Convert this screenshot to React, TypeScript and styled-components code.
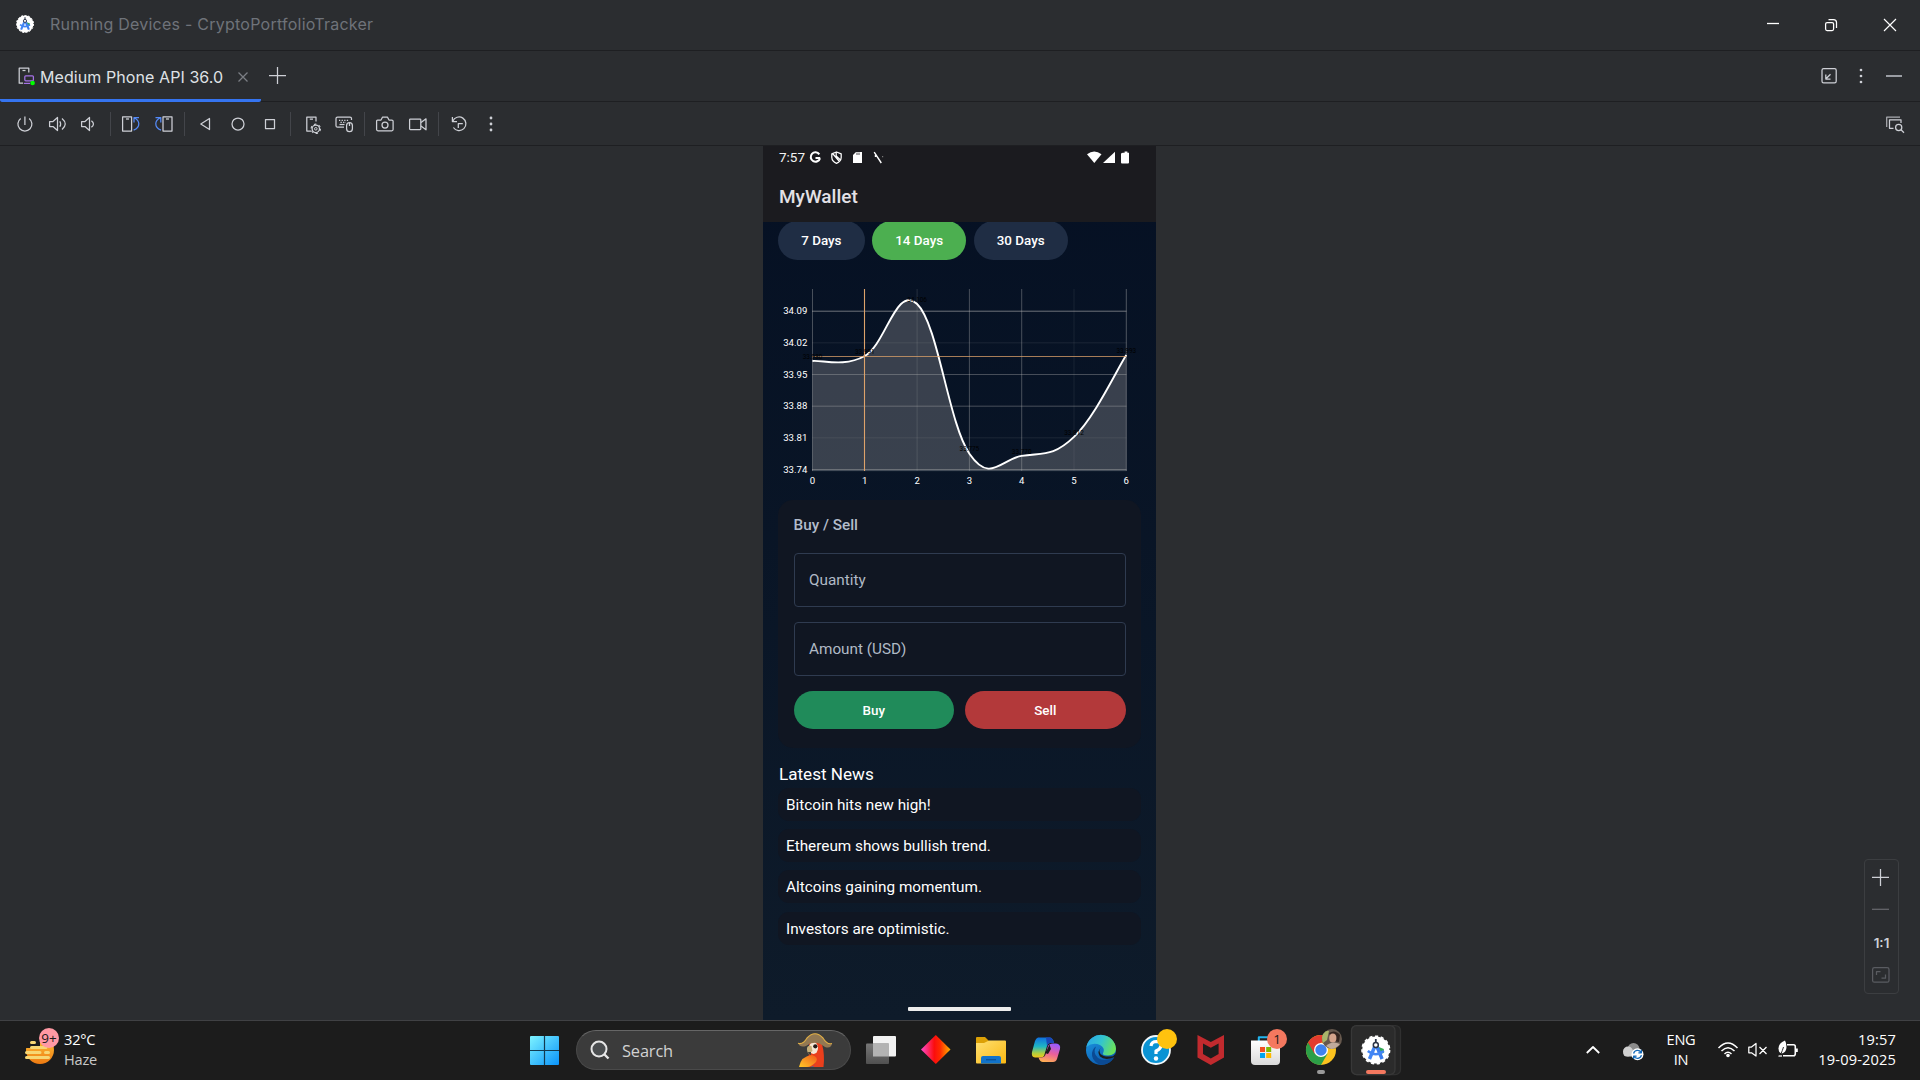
import React from 'react';
import styled, { createGlobalStyle } from 'styled-components';

const Global = createGlobalStyle`
  * { box-sizing: border-box; }
  html, body { margin: 0; padding: 0; background: #2b2d30; overflow: hidden; }
  body { font-family: Inter, "Liberation Sans", sans-serif; color: #dfe1e5; }
  svg { display: block; flex: none; }
`;

const Desktop = styled.div`
  width: 1920px;
  height: 1080px;
  display: flex;
  flex-direction: column;
  background: #2b2d30;
`;

/* ---------- IDE window ---------- */

const TitleBar = styled.header`
  height: 51px;
  display: flex;
  align-items: center;
  border-bottom: 1px solid #1e1f22;
  padding: 0 0 2px 16px;
`;

const TitleText = styled.div`
  margin-left: 16px;
  font-size: 16px;
  letter-spacing: 0.24px;
  color: #6f737a;
  white-space: nowrap;
`;

const Push = styled.div`
  margin-left: auto;
  display: flex;
  align-items: center;
`;

const TabBar = styled.div`
  height: 51px;
  display: flex;
  border-bottom: 1px solid #1e1f22;
`;

const Tab = styled.div`
  width: 261px;
  height: 51px;
  display: flex;
  align-items: center;
  padding: 4px 0 0 16px;
  border-bottom: 3px solid #3574f0;
  border-radius: 0 0 2px 2px;
`;

const TabText = styled.span`
  width: 194px;
  margin-left: 4px;
  font-size: 16px;
  letter-spacing: 0.08px;
  color: #dfe1e5;
  white-space: nowrap;
`;

const ToolBar = styled.div`
  height: 44px;
  display: flex;
  align-items: center;
  padding-left: 10px;
  border-bottom: 1px solid #1e1f22;
`;

const Separator = styled.div`
  width: 1px;
  height: 24px;
  margin: 0 5px 0 4px;
  background: #43454a;
`;

const Stage = styled.main`
  height: 874px;
  display: flex;
  justify-content: space-between;
  align-items: flex-end;
`;

const Side = styled.div<{ $w: number }>`
  width: ${(p) => p.$w}px;
  display: flex;
  justify-content: flex-end;
`;

const ZoomPanel = styled.div`
  width: 35px;
  height: 135px;
  margin: 0 21px 26px 0;
  border: 1px solid #3c3e41;
  border-radius: 4px;
  display: flex;
  flex-direction: column;
  align-items: center;
`;

const Ratio = styled.div`
  height: 32px;
  font: 600 13.5px/26px Inter, sans-serif;
  color: #ced0d6;
`;

/* ---------- Phone ---------- */

const Phone = styled.section`
  width: 393px;
  height: 874px;
  display: flex;
  flex-direction: column;
  font-family: Roboto, sans-serif;
  color: #fff;
  background: linear-gradient(#051023, #0e1b2a);
`;

const PhoneHeader = styled.div`
  height: 76px;
  background: #1b1b1f;
  padding: 0 16px;
`;

const StatusBar = styled.div`
  height: 23px;
  display: flex;
  align-items: center;
  font-size: 13.5px;
  color: #f2f2f2;
`;

const StatusTime = styled.span`
  width: 28px;
  padding-bottom: 1px;
`;

const AppTitle = styled.h1`
  margin: 16px 0 0;
  font-size: 19px;
  line-height: 24px;
  font-weight: 500;
  color: #e3e1e6;
`;

const Scroll = styled.div`
  height: 798px;
  overflow: hidden;
  padding: 0 15px;
  display: flex;
  flex-direction: column;
`;

const RangeRow = styled.div`
  display: flex;
  gap: 7.5px;
  margin-top: -1px;
`;

const RangeChip = styled.button<{ $active?: boolean; $w: number }>`
  width: ${(p) => p.$w}px;
  height: 38.5px;
  border: 0;
  padding: 0;
  border-radius: 20px;
  background: ${(p) => (p.$active ? '#4caf50' : '#1f2d44')};
  color: #fff;
  font: 500 13.4px Roboto, sans-serif;
`;

const ChartBox = styled.div`
  height: 228px;
  margin: 12.5px 0 0 -15px;
`;

const Card = styled.div`
  height: 248px;
  padding: 16px 15.5px 0;
  border-radius: 15px;
  background: #101622;
`;

const CardTitle = styled.h2`
  margin: 0 0 18px;
  font-size: 15.3px;
  line-height: 19px;
  font-weight: 500;
  color: #b3bccb;
`;

const Field = styled.div`
  height: 54px;
  margin-bottom: 15px;
  padding-left: 14.5px;
  border: 1px solid #2f3b50;
  border-radius: 4px;
  font-size: 15.3px;
  line-height: 52px;
  color: #b0bac6;
`;

const Actions = styled.div`
  display: flex;
  gap: 11px;
`;

const Action = styled.button<{ $bg: string }>`
  flex: 1;
  height: 38px;
  border: 0;
  border-radius: 20px;
  background: ${(p) => p.$bg};
  color: #fff;
  font: 500 13.4px Roboto, sans-serif;
`;

const NewsTitle = styled.h2`
  margin: 15px 0 3px 1px;
  font-size: 17.1px;
  line-height: 22px;
  font-weight: 400;
`;

const NewsItem = styled.div`
  height: 33px;
  margin-bottom: 8.2px;
  padding-left: 8px;
  border-radius: 11px;
  background: #101622;
  font-size: 15.3px;
  line-height: 34.6px;
  flex: none;
`;

const HomePill = styled.div`
  width: 103px;
  height: 4px;
  margin: auto auto 9px;
  border-radius: 1px;
  background: #ededed;
`;

/* ---------- Taskbar ---------- */

const Taskbar = styled.footer`
  height: 60px;
  display: flex;
  align-items: center;
  background: #1c1c1c;
  border-top: 1px solid #404144;
  font-family: "Open Sans", "Noto Sans", sans-serif;
`;

const Weather = styled.div`
  width: 517px;
  display: flex;
  align-items: center;
  padding: 0 0 1px 22px;
`;

const TwoLines = styled.div<{ $align?: string; $w?: number; $track?: number }>`
  width: ${(p) => (p.$w ? `${p.$w}px` : 'auto')};
  padding-bottom: 3px;
  text-align: ${(p) => p.$align || 'left'};
  font-size: 14.6px;
  line-height: 20px;
  letter-spacing: ${(p) => p.$track ?? -0.3}px;
  color: #fff;
  white-space: nowrap;
`;

const Muted = styled.div`
  color: #c8c8c8;
`;

const Search = styled.div`
  width: 275px;
  height: 40px;
  margin: 0 3px 1px 4px;
  padding: 0 17px 0 13px;
  display: flex;
  align-items: center;
  border-radius: 20px;
  border: 1px solid #4a4a4a;
  border-top-color: #666;
  background: #3b3b3b;
`;

const SearchText = styled.span`
  flex: 1;
  margin-left: 12px;
  padding-top: 1px;
  font-size: 16.4px;
  letter-spacing: -0.15px;
  color: #d2d2d2;
`;

const Tray = styled.div`
  margin-left: auto;
  display: flex;
  align-items: center;
  padding-right: 24px;
`;

/* Each glyph is authored on the window's own pixel grid and cropped by its viewBox. */
type GlyphProps = { x: number; y: number; w: number; h: number; children: React.ReactNode; c?: string };
const Glyph = ({ x, y, w, h, c = '#ced0d6', children }: GlyphProps) => (
  <svg
    width={w}
    height={h}
    viewBox={`${x} ${y} ${w} ${h}`}
    fill="none"
    stroke={c}
    strokeWidth="1.25"
    strokeLinejoin="round"
  >
    {children}
  </svg>
);

const Tool = ({ x, children }: { x: number; children: React.ReactNode }) => (
  <Glyph x={x} y={102} w={32} h={43}>{children}</Glyph>
);

const App1 = ({ i, children }: { i: number; children: React.ReactNode }) => (
  <Glyph x={854 + i * 55} y={1021} w={55} h={59} c="none">{children}</Glyph>
);

const Compass = ({ cx, cy, s }: { cx: number; cy: number; s: number }) => (
  <g transform={`translate(${cx} ${cy}) scale(${s})`} stroke="none">
    <circle r="13.6" fill="#fff" />
    <circle r="13.8" fill="none" stroke="#fff" strokeWidth="1.6" strokeDasharray="3.2 2.6" />
    <path d="M3 -3 L8 -1 L8 3 L4 4Z" fill="#34a853" />
    <path d="M0 -6 L-6.3 9" stroke="#4285f4" strokeWidth="3.4" fill="none" />
    <path d="M0 -6 L6.3 9" stroke="#3b7ded" strokeWidth="3.4" fill="none" />
    <path d="M-8 1 Q0 7.5 8 1" stroke="#4285f4" strokeWidth="2.6" fill="none" />
    <circle cy="-5" r="2.5" fill="#fff" stroke="#2a3345" strokeWidth="1.5" />
    <path d="M0 -11V-8" stroke="#2a3345" strokeWidth="1.8" />
  </g>
);

/* ---------- Price chart ---------- */

const values = [33.98, 33.991, 34.106, 33.775, 33.77, 33.812, 33.993];
const px = (i: number) => 812.5 + i * 52.3;
const py = (v: number) => 469.5 - (v - 33.74) * 452.3;

const curve = () => {
  const pts = values.map((v, i) => [px(i), py(v)]);
  const at = (i: number) => pts[Math.max(0, Math.min(pts.length - 1, i))];
  let d = `M${pts[0].join(' ')}`;
  for (let i = 1; i < pts.length; i += 1) {
    const k = 0.2;
    const c1 = [0, 1].map((a) => at(i - 1)[a] + (at(i)[a] - at(i - 2)[a]) * k);
    const c2 = [0, 1].map((a) => at(i)[a] - (at(i + 1)[a] - at(i - 1)[a]) * k);
    d += ` C${c1.join(' ')} ${c2.join(' ')} ${pts[i].join(' ')}`;
  }
  return d;
};

const yTicks = [34.09, 34.02, 33.95, 33.88, 33.81, 33.74];
const yAlpha = [0.6, 0.12, 0.38, 0.38, 0.12, 0.5];
const xAlpha = [0.38, 0, 0.18, 0.38, 0.38, 0.1, 0.42];

const Chart = () => {
  const d = curve();
  return (
    <svg width="393" height="228" viewBox="763 272 393 228" fontFamily="Roboto, sans-serif">
      <path d={`${d} L1126.3 469.5 L812.5 469.5Z`} fill="#8c8c90" fillOpacity="0.38" />
      {yTicks.map((v, i) => (
        <React.Fragment key={v}>
          <path d={`M812 ${py(v)}H1126.5`} stroke="#b4b4b4" strokeOpacity={yAlpha[i]} />
          <text x="807.3" y={py(v) + 3.1} fontSize="9.6" fill="#fff" textAnchor="end">{v.toFixed(2)}</text>
        </React.Fragment>
      ))}
      {xAlpha.map((a, i) => (
        <React.Fragment key={i}>
          <path d={`M${px(i)} 289V471`} stroke="#b4b4b4" strokeOpacity={a} />
          <text x={px(i)} y="483.6" fontSize="9.6" fill="#fff" textAnchor="middle">{i}</text>
        </React.Fragment>
      ))}
      <path d="M812 470.6H1126.5" stroke="#8a8f98" strokeOpacity="0.5" />
      <path d={d} fill="none" stroke="#fff" strokeWidth="1.9" />
      <path d="M864.5 289V471" stroke="#dda26a" strokeWidth="1.1" />
      <path d="M812 356.5H1126.5" stroke="#dda26a" strokeOpacity="0.75" />
      {values.map((v, i) => (
        <text key={v} x={px(i)} y={py(v) - 2.2} fontSize="6.4" fill="#000" textAnchor="middle">{v.toFixed(3)}</text>
      ))}
    </svg>
  );
};

const news = ['Bitcoin hits new high!', 'Ethereum shows bullish trend.', 'Altcoins gaining momentum.', 'Investors are optimistic.'];

export default function App() {
  return (
    <Desktop>
      <Global />
      <TitleBar>
        <Glyph x={16} y={15} w={18} h={18} c="none"><Compass cx={25} cy={24} s={0.62} /></Glyph>
        <TitleText>Running Devices - CryptoPortfolioTracker</TitleText>
        <Push>
          <Glyph x={1760} y={8} w={160} h={32} c="#fff">
            <path d="M1767 23.5H1779" strokeWidth="1.3" />
            <rect x="1825.6" y="22.6" width="8" height="8" rx="1.5" />
            <path d="M1828.5 19.6H1833.5Q1836.5 19.6 1836.5 22.6V28" />
            <path d="M1884 19L1896 31M1896 19L1884 31" strokeWidth="1.15" />
          </Glyph>
        </Push>
      </TitleBar>

      <TabBar>
        <Tab>
          <Glyph x={16} y={67} w={20} h={22}>
            <path d="M23 84.2H19.2V69.2H28.8V73.5" />
            <path d="M22.5 71.5H25.5" />
            <rect x="24.8" y="76.8" width="8.6" height="5" rx="1" stroke="#a571e6" />
            <path d="M23.8 84.4H30" stroke="#a571e6" />
            <circle cx="32.6" cy="84" r="2.3" fill="#0f0" stroke="none" />
          </Glyph>
          <TabText>Medium Phone API 36.0</TabText>
          <Glyph x={234} y={67} w={20} h={22} c="#7b7e84">
            <path d="M238.5 73.5L247.5 82.5M247.5 73.5L238.5 82.5" />
          </Glyph>
        </Tab>
        <Glyph x={261} y={51} w={32} h={50}>
          <path d="M269 75.5H286M277.5 67V84" />
        </Glyph>
        <Push>
          <Glyph x={1812} y={51} w={108} h={50}>
            <rect x="1822" y="68.7" width="14.2" height="14.2" rx="1.6" />
            <path d="M1830.5 74.2L1826 78.8M1825.8 74.5V79H1830.5" />
            <g fill="#ced0d6" stroke="none">
              <circle cx="1861" cy="70" r="1.35" /><circle cx="1861" cy="76" r="1.35" /><circle cx="1861" cy="82" r="1.35" />
            </g>
            <path d="M1886 76H1902" stroke="#9a9da3" strokeWidth="2" />
          </Glyph>
        </Push>
      </TabBar>

      <ToolBar>
        <Tool x={10}>
          <path d="M20.7 118.4A7 7 0 1 0 29.1 118.4M24.9 116.5V125" />
        </Tool>
        <Tool x={42}>
          <path d="M49.6 121.5H53L57.5 117.5V130.5L53 126.5H49.6ZM59.8 121.2Q61.5 124 59.8 126.8M62 118.5Q68.5 124 62 129.5" />
        </Tool>
        <Tool x={74}>
          <path d="M81.6 121.5H85L89.5 117.5V130.5L85 126.5H81.6ZM91.4 120.7Q95.5 124 91.4 127.3" />
        </Tool>
        <Separator />
        <Tool x={116}>
          <rect x="122.6" y="116.8" width="9" height="14.2" />
          <path d="M126 119H129" />
          <path d="M133.6 130.2Q139 128 138.8 123.5Q138.5 120 134.5 118M134 122.5V117.5H139" stroke="#548af7" />
        </Tool>
        <Tool x={148}>
          <rect x="163" y="116.8" width="9" height="14.2" />
          <path d="M166 119H169" />
          <path d="M161 130.2Q155.6 128 155.8 123.5Q156 120 160 118M155.5 117.5H160.8V122.5" stroke="#548af7" />
        </Tool>
        <Separator />
        <Tool x={190}><path d="M209.5 118.5V129.5L200.8 124Z" /></Tool>
        <Tool x={222}><circle cx="238" cy="124" r="6" /></Tool>
        <Tool x={254}><rect x="265.5" y="119.5" width="9" height="9" /></Tool>
        <Separator />
        <Tool x={296}>
          <path d="M311 131H306.8V117H316V121.5M309.8 119.2H313" />
          <circle cx="315.8" cy="128.8" r="3.7" />
          <circle cx="315.8" cy="128.8" r="4.7" strokeWidth="1.1" strokeDasharray="2.4 2.52" />
          <circle cx="315.8" cy="128.8" r="1.3" strokeWidth="1" />
        </Tool>
        <Tool x={328}>
          <path d="M344 127.2H337.5Q336 127.2 336 125.7V118.5Q336 117 337.5 117H350Q351.5 117 351.5 118.5V120" />
          <path d="M339 120.3H349M340.5 122.3H346" strokeDasharray="1.3 1.3" />
          <path d="M339.5 124.5H344.5" />
          <rect x="346.6" y="122.5" width="5.8" height="9.2" rx="2.9" />
          <path d="M349.5 123V126" />
        </Tool>
        <Separator />
        <Tool x={370}>
          <path d="M377.5 120H381L382.6 117H387.4L389 120H391.8Q393.1 120 393.1 121.2V129.6Q393.1 130.8 391.8 130.8H378Q376.6 130.8 376.6 129.6V120.9Q376.6 120 377.5 120Z" />
          <circle cx="385" cy="125" r="3" />
        </Tool>
        <Tool x={402}>
          <rect x="409.6" y="119" width="11.2" height="10.6" rx=".8" />
          <path d="M421 122.6L426 118.8V129.8L421 126" />
        </Tool>
        <Separator />
        <Tool x={444}>
          <path d="M452.4 117V121.5H457M452.8 121.2A6.8 6.8 0 1 1 453.4 127.5" />
          <path d="M458.3 128V123.5H462.8" />
        </Tool>
        <Tool x={476}>
          <g fill="#ced0d6" stroke="none">
            <circle cx="491" cy="118" r="1.4" /><circle cx="491" cy="124" r="1.4" /><circle cx="491" cy="130" r="1.4" />
          </g>
        </Tool>
        <Push>
          <Glyph x={1880} y={102} w={40} h={43}>
            <path d="M1886.7 127V117.2H1900" stroke="#a9abb0" />
            <path d="M1893.5 128.3H1889.5V119.8H1901V123" />
            <circle cx="1898.7" cy="127.5" r="3.1" />
            <path d="M1901 129.8L1904 132.8" />
          </Glyph>
        </Push>
      </ToolBar>

      <Stage>
        <Side $w={763} />
        <Phone>
          <PhoneHeader>
            <StatusBar>
              <StatusTime>7:57</StatusTime>
              <Glyph x={807} y={146} w={80} h={23} c="#fff">
                <path d="M820.2 158H815.5M819.3 154.3A4.7 4.7 0 1 0 820 158.2" strokeWidth="2.1" />
                <path d="M836.5 152L841.2 153.8V157.5Q841 161.5 836.5 163.3Q832 161.5 831.8 157.5V153.8ZM833 154L839.5 161.5M836.2 152V156L840.5 160" />
                <path d="M856 152H862V163H853V155Z" fill="#fff" stroke="none" />
                <path d="M857 152.5V155M859 152.5V155" stroke="#1b1b20" strokeWidth=".8" />
                <path d="M874.2 152.2L881.3 163M875.5 157V155" strokeWidth="1.4" />
                <path d="M882 156.5H883.2" stroke="#777" />
              </Glyph>
              <Push>
                <Glyph x={1080} y={146} w={60} h={23} c="none">
                  <g fill="#fff">
                    <path d="M1087 154.2Q1094.3 148.8 1101.5 154.2L1094.3 163Z" />
                    <path d="M1115 151.8V163H1103Z" />
                    <path d="M1123.3 152.8H1124.6V151.5H1127.4V152.8H1129V162.5Q1129 163.5 1128 163.5H1122Q1121 163.5 1121 162.5V154Q1121 152.8 1123.3 152.8Z" />
                  </g>
                </Glyph>
              </Push>
            </StatusBar>
            <AppTitle>MyWallet</AppTitle>
          </PhoneHeader>
          <Scroll>
            <RangeRow>
              <RangeChip $w={86.7}>7 Days</RangeChip>
              <RangeChip $w={94} $active>14 Days</RangeChip>
              <RangeChip $w={94}>30 Days</RangeChip>
            </RangeRow>
            <ChartBox><Chart /></ChartBox>
            <Card>
              <CardTitle>Buy / Sell</CardTitle>
              <Field>Quantity</Field>
              <Field>Amount (USD)</Field>
              <Actions>
                <Action $bg="#208b5a">Buy</Action>
                <Action $bg="#b3393a">Sell</Action>
              </Actions>
            </Card>
            <NewsTitle>Latest News</NewsTitle>
            {news.map((n) => <NewsItem key={n}>{n}</NewsItem>)}
            <HomePill />
          </Scroll>
        </Phone>
        <Side $w={764}>
          <ZoomPanel>
            <Glyph x={1865} y={860} w={33} h={70}>
              <path d="M1872 877.3H1889M1880.5 869V886" />
              <path d="M1872 909.3H1889" stroke="#66686d" />
            </Glyph>
            <Ratio>1:1</Ratio>
            <Glyph x={1865} y={962} w={33} h={26} c="#5a5c61">
              <rect x="1872.6" y="967.6" width="16.4" height="14.6" rx="1.8" />
              <path d="M1876.5 975V971.5H1880.5M1885.5 974.5V978.2H1881.5" />
            </Glyph>
          </ZoomPanel>
        </Side>
      </Stage>

      <Taskbar>
        <Weather>
          <Glyph x={22} y={1021} w={42} h={56} c="none">
            <defs>
              <linearGradient id="sun" x1="0" y1="0" x2="0" y2="1"><stop stopColor="#ffc83a" /><stop offset="1" stopColor="#ee7a12" /></linearGradient>
            </defs>
            <circle cx="40" cy="1049" r="14" fill="url(#sun)" />
            <path d="M22 1030H40V1047H22Z" fill="#1c1c1c" />
            <g stroke="#f7d774" strokeWidth="3" strokeLinecap="round">
              <path d="M31.5 1041.5H34.5M31.5 1046.5H46M26.5 1051.5H40M45.5 1051.5H48.5M26.5 1056.5H48.5" />
            </g>
            <circle cx="49" cy="1037" r="10" fill="#ff99a4" />
            <text x="49" y="1042" fontSize="13.5" fill="#1a1a1a" textAnchor="middle" fontFamily="Open Sans">9+</text>
          </Glyph>
          <TwoLines $track={-0.2}>32°C<Muted>Haze</Muted></TwoLines>
        </Weather>

        <Glyph x={517} y={1021} w={55} h={59} c="none">
          <defs>
            <linearGradient id="win" x1="0" y1="0" x2="1" y2="1"><stop stopColor="#7df3ff" /><stop offset="1" stopColor="#0a93fa" /></linearGradient>
          </defs>
          <rect x="530" y="1036" width="29" height="29" rx="1" fill="url(#win)" />
          <path d="M544.5 1036V1065M530 1050.5H559" stroke="#123a50" strokeWidth="1.2" />
        </Glyph>

        <Search>
          <Glyph x={590} y={1038} w={20} h={24} c="#e6e6e6">
            <circle cx="599" cy="1049" r="7.5" strokeWidth="2" fill="#4b4e50" />
            <path d="M604 1054L608.5 1058.5" strokeWidth="2.4" />
          </Glyph>
          <SearchText>Search</SearchText>
          <Glyph x={798} y={1031} w={36} h={38} c="none">
            <defs>
              <linearGradient id="wing" x1="0" y1="1" x2="1" y2="0"><stop stopColor="#ffc928" /><stop offset="1" stopColor="#f25a1a" /></linearGradient>
            </defs>
            <path d="M810 1043Q818 1036 823 1044Q826 1055 824.5 1067H806Q812 1052 810 1043Z" fill="#ea3f1c" />
            <path d="M800 1067Q802 1056 813 1055Q820 1057 817 1062Q812 1067 808 1067Z" fill="url(#wing)" />
            <path d="M811 1067Q816 1066 816 1064L814 1067Z" fill="#2872b8" />
            <ellipse cx="814.5" cy="1048" rx="4.5" ry="6" fill="#f6e8d6" />
            <circle cx="816.3" cy="1046.3" r="2.1" fill="#221a18" />
            <path d="M812.5 1046Q807.5 1045 808 1050Q808.5 1054 811.5 1055Q811 1052 813.5 1051Z" fill="#c7b07a" />
            <path d="M809 1052Q809.5 1055 812 1055L812 1052Z" fill="#4a4136" />
            <path d="M799 1043Q804 1045 808 1038Q816 1029 824 1038Q828 1045 833 1043.5Q832 1049 826 1047Q816 1039 807 1046Q801 1048 799 1043Z" fill="#927853" />
            <path d="M799 1043.3Q804 1045 808 1038Q816 1029.5 824 1038Q828 1045 833 1043.5" stroke="#dfae45" strokeWidth="1.1" />
          </Glyph>
        </Search>

        <App1 i={0}>
          <defs>
            <linearGradient id="tv" x1="0" y1="0" x2="0" y2="1"><stop stopColor="#777" /><stop offset="1" stopColor="#505050" /></linearGradient>
          </defs>
          <rect x="873" y="1036" width="23" height="20.5" rx="1" fill="#f2f2f2" />
          <rect x="866" y="1043.5" width="23" height="20.5" rx="1" fill="url(#tv)" />
          <rect x="873" y="1043.5" width="16" height="13" fill="#b3b3b3" />
        </App1>
        <App1 i={1}>
          <defs>
            <linearGradient id="dia"><stop stopColor="#ff4bd0" /><stop offset=".45" stopColor="#fb0d0d" /><stop offset=".65" stopColor="#ff2a00" /><stop offset="1" stopColor="#ffb400" /></linearGradient>
          </defs>
          <path d="M935.8 1035L950.5 1049.5L935.8 1064L921 1049.5Z" fill="url(#dia)" />
        </App1>
        <App1 i={2}>
          <defs>
            <linearGradient id="fol" x1="0" y1="0" x2="1" y2="1"><stop stopColor="#ffe071" /><stop offset="1" stopColor="#fab812" /></linearGradient>
          </defs>
          <path d="M976 1038Q976 1037 977 1037H985L989 1041V1046H976Z" fill="#dda106" />
          <path d="M976 1043H984L989 1040.5H1005Q1006 1040.5 1006 1041.5V1062.5Q1006 1063.5 1005 1063.5H977Q976 1063.5 976 1062.5Z" fill="url(#fol)" />
          <path d="M981 1063.5V1058Q981 1056 983 1056H999Q1001 1056 1001 1058V1063.5Z" fill="#1173ca" />
          <path d="M986 1059.7H996" stroke="#0a539b" strokeWidth="1.4" />
        </App1>
        <App1 i={3}>
          <defs>
            <linearGradient id="cp1" x1="0" y1="0" x2="0" y2="1"><stop stopColor="#0f70e0" /><stop offset=".45" stopColor="#1fb6c4" /><stop offset=".8" stopColor="#b4cf3c" /><stop offset="1" stopColor="#f2c61a" /></linearGradient>
            <linearGradient id="cp2" x1=".6" y1="0" x2=".3" y2="1"><stop stopColor="#9b5bff" /><stop offset=".5" stopColor="#ea5f9b" /><stop offset="1" stopColor="#ffb052" /></linearGradient>
          </defs>
          <path d="M1038 1037.5H1050Q1053 1038 1054 1043H1050Q1048 1043 1047 1046L1044 1056Q1043 1057.5 1040 1057.5H1035Q1031 1057 1032 1052L1035 1041Q1036 1038 1038 1037.5Z" fill="url(#cp1)" />
          <path d="M1046 1037.5H1050Q1053 1038 1054 1043H1050Q1048 1043 1047 1046Z" fill="#1a47b8" />
          <path d="M1053 1043.5H1056Q1061 1044 1060 1049L1057 1059Q1056 1062 1053 1062H1043Q1040 1062 1038.5 1057.5H1041Q1045 1057.5 1046 1053L1048 1046Q1049 1043.5 1053 1043.5Z" fill="url(#cp2)" />
          <path d="M1047.5 1049L1049.5 1044.5L1051 1049L1048 1054L1045 1053Z" fill="#1c1c1c" />
        </App1>
        <App1 i={4}>
          <defs>
            <linearGradient id="ed1" x1="0" y1=".2" x2="1" y2=".5"><stop stopColor="#2aa7e8" /><stop offset=".5" stopColor="#33c4cf" /><stop offset="1" stopColor="#6be35a" /></linearGradient>
            <linearGradient id="ed2" x1="0" y1="0" x2=".6" y2="1"><stop stopColor="#1c9be6" /><stop offset="1" stopColor="#0c5aae" /></linearGradient>
          </defs>
          <circle cx="1101" cy="1050" r="15" fill="url(#ed2)" />
          <path d="M1086.3 1047A15 15 0 0 1 1116 1049Q1115.5 1055 1108 1055.5Q1101 1055.5 1103.5 1052Q1105 1048 1100 1045Q1093 1041.5 1086.3 1047Z" fill="url(#ed1)" />
          <path d="M1096 1046.5Q1092.5 1053 1098 1058Q1104 1062 1114 1057.5Q1109 1065.5 1099.5 1064.8Q1091 1060 1092 1053Q1093 1048 1096 1046.5Z" fill="#0b4a93" />
          <path d="M1101.5 1047.5Q1098 1050 1100.5 1054Q1104 1057.5 1113 1056.2L1116.2 1053L1114.8 1057Q1105 1061 1100 1056.5Q1096.5 1051 1101.5 1047.5Z" fill="#1c1c1c" />
        </App1>
        <App1 i={5}>
          <circle cx="1156" cy="1050" r="14" fill="#0a93d4" stroke="#f2f8fb" strokeWidth="1.8" />
          <path d="M1151 1046Q1151.5 1041.5 1156.5 1041.5Q1161.5 1042 1161 1046Q1160.5 1049 1156 1051V1054" stroke="#fff" strokeWidth="3.2" />
          <circle cx="1156" cy="1058.5" r="2.2" fill="#fff" />
          <circle cx="1167" cy="1039" r="10" fill="#ffc20e" />
        </App1>
        <App1 i={6}>
          <path d="M1197.5 1035L1210.8 1042L1224 1035V1057.5L1210.8 1065L1197.5 1057.5ZM1203 1043.5V1054L1210.8 1058.5L1218.6 1054V1043.5L1210.8 1047.8Z" fill="#c12a2e" fillRule="evenodd" />
        </App1>
        <App1 i={7}>
          <defs>
            <linearGradient id="bag" x1="0" y1="0" x2="0" y2="1"><stop stopColor="#fff" /><stop offset="1" stopColor="#d9d9d9" /></linearGradient>
          </defs>
          <path d="M1258.8 1041.5V1037.2H1270" stroke="#22b4ee" strokeWidth="2" />
          <path d="M1251 1040.5H1280V1061Q1280 1065 1276 1065H1255Q1251 1065 1251 1061Z" fill="url(#bag)" />
          <rect x="1260" y="1047" width="5" height="5" fill="#f25022" />
          <rect x="1266.2" y="1047" width="5" height="5" fill="#7fba00" />
          <rect x="1260" y="1053" width="5" height="5" fill="#00a4ef" />
          <rect x="1266.2" y="1053" width="5" height="5" fill="#ffb900" />
          <circle cx="1277" cy="1039" r="10" fill="#f4785f" />
          <text x="1277" y="1044" fontSize="13.5" fill="#1a1a1a" textAnchor="middle" fontFamily="Open Sans">1</text>
        </App1>
        <App1 i={8}>
          <circle cx="1321" cy="1050" r="15" fill="#fcc31e" />
          <path d="M1308 1042.5A15 15 0 0 0 1321 1065L1327.5 1053.8L1321 1050Z" fill="#2c9f47" />
          <path d="M1308 1042.5A15 15 0 0 1 1334 1042.5H1321L1314.5 1053.8Z" fill="#e33b2e" />
          <circle cx="1321" cy="1050" r="7" fill="#fff" />
          <circle cx="1321" cy="1050" r="5.7" fill="#3f82ee" />
          <circle cx="1332" cy="1039" r="10" fill="#66584d" />
          <path d="M1323 1034Q1326 1030 1329 1031L1327 1040L1323 1043Q1321 1038 1323 1034Z" fill="#a9b56a" />
          <path d="M1329 1033Q1335 1029 1340 1035L1339 1042L1333 1041Z" fill="#33241f" />
          <ellipse cx="1332.8" cy="1038" rx="3.6" ry="4.5" fill="#d6a48b" />
          <path d="M1326 1046Q1332 1040 1340 1044Q1336 1049 1331 1049Z" fill="#c0aa9b" />
          <rect x="1317" y="1070" width="8" height="4" rx="2" fill="#9a9a9a" />
        </App1>
        <App1 i={9}>
          <rect x="1351.5" y="1025.5" width="49" height="49" rx="5" fill="#252525" stroke="#303030" />
          <rect x="1351.5" y="1025.5" width="43.5" height="49" rx="5" fill="#2b2b2b" stroke="#383838" />
          <Compass cx={1375.8} cy={1050} s={1} />
          <rect x="1366" y="1070" width="20" height="4" rx="2" fill="#f4785f" />
        </App1>

        <Tray>
          <Glyph x={1580} y={1021} w={72} h={59} c="#fff">
            <path d="M1586.8 1053L1593 1047L1599.2 1053" strokeWidth="1.8" />
            <g stroke="none">
              <circle cx="1633.5" cy="1049" r="6" fill="#8c8c8c" />
              <circle cx="1628" cy="1051.5" r="5" fill="#d0d0d0" />
              <rect x="1623.5" y="1050.5" width="12" height="6" rx="3" fill="#d0d0d0" />
              <circle cx="1637.5" cy="1054.3" r="6" fill="#fff" />
            </g>
            <path d="M1633.6 1053.5A4 4 0 0 1 1641 1052.4M1641.4 1055.2A4 4 0 0 1 1634 1056.3M1641.4 1049.8V1052.8H1638.4M1633.6 1059V1056H1636.6" stroke="#1469b8" />
          </Glyph>
          <TwoLines $align="center" $w={58}>ENG<br />IN</TwoLines>
          <Glyph x={1710} y={1021} w={95} h={59} c="#fff">
            <path d="M1718.5 1048Q1728 1038 1737.5 1048M1721.5 1051Q1728 1044.5 1734.5 1051M1724.5 1054Q1728 1050.5 1731.5 1054" strokeWidth="1.5" />
            <circle cx="1728" cy="1055.5" r="1.8" fill="#fff" stroke="none" />
            <path d="M1748.8 1047H1751.5L1756 1043.5V1056L1751.5 1052.8H1748.8ZM1759.5 1047L1766.5 1054M1766.5 1047L1759.5 1054" />
            <path d="M1787 1044.8H1793.5Q1795.3 1044.8 1795.3 1046.5V1053.5Q1795.3 1055.8 1793.5 1055.8H1783" strokeWidth="1.6" />
            <path d="M1796.8 1048.5V1052" strokeWidth="2" />
            <path d="M1785 1040.5Q1778.5 1043 1778.5 1048.5Q1778.5 1053 1782 1053.5Q1786.5 1052 1786.5 1047Q1786.5 1043 1785 1040.5Z" fill="#fff" stroke="none" />
            <path d="M1779 1056.5Q1781 1055 1783.5 1047" stroke="#1c1c1c" strokeWidth=".9" />
            <path d="M1778.5 1056H1782" />
          </Glyph>
          <TwoLines $align="right" $w={91} $track={0.15}>19:57<br />19-09-2025</TwoLines>
        </Tray>
      </Taskbar>
    </Desktop>
  );
}
